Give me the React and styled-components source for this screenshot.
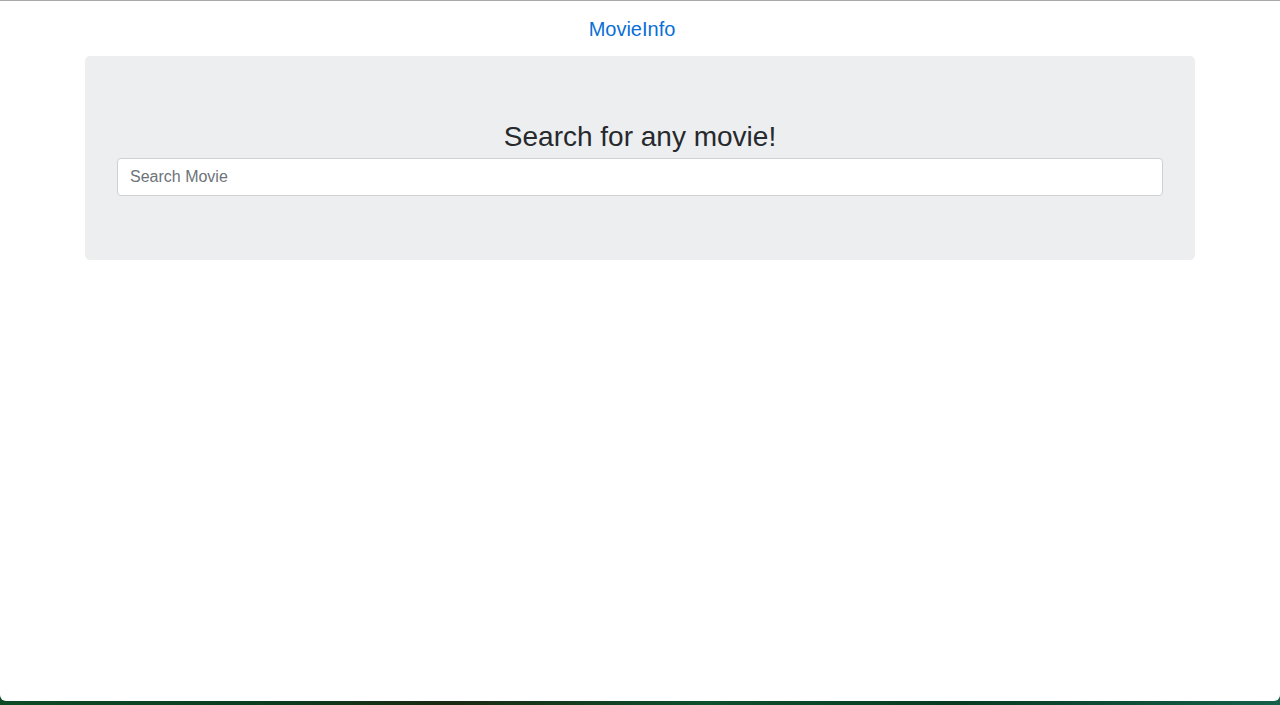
import styled, { createGlobalStyle } from "styled-components";
import { useState } from "react";

const GlobalStyle = createGlobalStyle`
    html, body {
        margin: 0;
        padding: 0;
        height: 100%;
    }
    body {
        background: linear-gradient(90deg, #0f4a26 0%, #0b3d1f 20%, #1a2a12 35%, #0e4f2c 55%, #0a3a22 75%, #14604a 100%);
        font-family: "Liberation Sans", Arial, sans-serif;
        overflow: hidden;
    }
    * {
        box-sizing: border-box;
    }
`;

// 창 전체
const Window = styled.div`
    height: 701px;
    background-color: white;
    border-top: 1px solid #a8a8a8;
    border-radius: 0 0 6px 6px;
    display: flex;
    flex-direction: column;
    align-items: center;
`;

// 상단 네비게이션
const Navbar = styled.nav`
    width: 100%;
    height: 55px;
    display: flex;
    justify-content: center;
    align-items: center;
    padding: 1px 32px 0 16px;
`;

const Brand = styled.a`
    color: #0a6fd6;
    font-size: 20px;
    line-height: 30px;
    text-decoration: none;
`;

// 검색 영역
const Jumbotron = styled.div`
    width: 1110px;
    padding: 64px 32px;
    background-color: #eceef0;
    border-radius: 5px;
    display: flex;
    flex-direction: column;
    align-items: stretch;
`;

const Title = styled.h3`
    margin: 0 0 5px;
    text-align: center;
    font-size: 28px;
    font-weight: 400;
    line-height: 33px;
    color: #27292c;
`;

const SearchInput = styled.input`
    width: 100%;
    height: 38px;
    padding: 6px 12px;
    font-family: "Liberation Sans", Arial, sans-serif;
    font-size: 16px;
    color: #495057;
    background: white;
    border: 1px solid #ced1d4;
    border-radius: 4px;
    outline: none;

    &::placeholder {
        color: #6c737a;
    }
`;

export default function App() {
    const [text, setText] = useState("");

    return (
        <>
            <GlobalStyle />
            <Window>
                <Navbar>
                    <Brand href="#">MovieInfo</Brand>
                </Navbar>
                <Jumbotron>
                    <Title>Search for any movie!</Title>
                    <SearchInput
                        placeholder="Search Movie"
                        value={text}
                        onChange={(e) => setText(e.target.value)}
                    />
                </Jumbotron>
            </Window>
        </>
    );
}
